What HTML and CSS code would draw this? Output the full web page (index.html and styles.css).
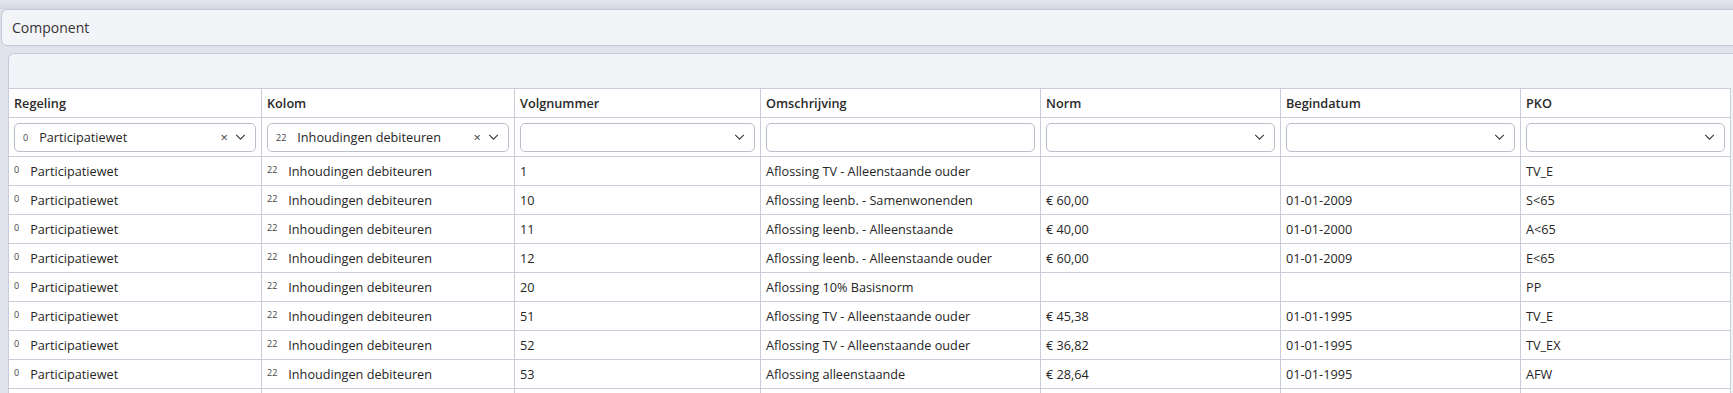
FILE: index.html
```html
<!DOCTYPE html>
<html lang="nl">
<head>
    <meta charset="UTF-8">
    <title>Component</title>
    <link rel="stylesheet" href="styles.css">
</head>
<body>
    <div class="topstrip"></div>
    <div class="component-bar">Component</div>

    <div class="panel">
        <div class="panel-toolbar"></div>
        <table class="grid">
            <colgroup>
                <col style="width:253px">
                <col style="width:253px">
                <col style="width:246px">
                <col style="width:280px">
                <col style="width:240px">
                <col style="width:240px">
                <col style="width:210px">
            </colgroup>
            <thead>
                <tr class="head">
                    <th>Regeling</th>
                    <th>Kolom</th>
                    <th>Volgnummer</th>
                    <th>Omschrijving</th>
                    <th>Norm</th>
                    <th>Begindatum</th>
                    <th>PKO</th>
                </tr>
                <tr class="filters">
                    <td><div class="filter"><span class="code">0</span><span class="val">Participatiewet</span><span class="clear">&times;</span><svg class="chev" viewBox="0 0 12 7"><polyline points="1,1 6,6 11,1"/></svg></div></td>
                    <td><div class="filter"><span class="code">22</span><span class="val">Inhoudingen debiteuren</span><span class="clear">&times;</span><svg class="chev" viewBox="0 0 12 7"><polyline points="1,1 6,6 11,1"/></svg></div></td>
                    <td><div class="filter"><span class="val"></span><svg class="chev" viewBox="0 0 12 7"><polyline points="1,1 6,6 11,1"/></svg></div></td>
                    <td><div class="filter"><span class="val"></span></div></td>
                    <td><div class="filter"><span class="val"></span><svg class="chev" viewBox="0 0 12 7"><polyline points="1,1 6,6 11,1"/></svg></div></td>
                    <td><div class="filter"><span class="val"></span><svg class="chev" viewBox="0 0 12 7"><polyline points="1,1 6,6 11,1"/></svg></div></td>
                    <td><div class="filter"><span class="val"></span><svg class="chev" viewBox="0 0 12 7"><polyline points="1,1 6,6 11,1"/></svg></div></td>
                </tr>
            </thead>
            <tbody>
                <tr><td><span class="code">0</span>Participatiewet</td><td><span class="code">22</span>Inhoudingen debiteuren</td><td>1</td><td>Aflossing TV - Alleenstaande ouder</td><td></td><td></td><td>TV_E</td></tr>
                <tr><td><span class="code">0</span>Participatiewet</td><td><span class="code">22</span>Inhoudingen debiteuren</td><td>10</td><td>Aflossing leenb. - Samenwonenden</td><td>€ 60,00</td><td>01-01-2009</td><td>S&lt;65</td></tr>
                <tr><td><span class="code">0</span>Participatiewet</td><td><span class="code">22</span>Inhoudingen debiteuren</td><td>11</td><td>Aflossing leenb. - Alleenstaande</td><td>€ 40,00</td><td>01-01-2000</td><td>A&lt;65</td></tr>
                <tr><td><span class="code">0</span>Participatiewet</td><td><span class="code">22</span>Inhoudingen debiteuren</td><td>12</td><td>Aflossing leenb. - Alleenstaande ouder</td><td>€ 60,00</td><td>01-01-2009</td><td>E&lt;65</td></tr>
                <tr><td><span class="code">0</span>Participatiewet</td><td><span class="code">22</span>Inhoudingen debiteuren</td><td>20</td><td>Aflossing 10% Basisnorm</td><td></td><td></td><td>PP</td></tr>
                <tr><td><span class="code">0</span>Participatiewet</td><td><span class="code">22</span>Inhoudingen debiteuren</td><td>51</td><td>Aflossing TV - Alleenstaande ouder</td><td>€ 45,38</td><td>01-01-1995</td><td>TV_E</td></tr>
                <tr><td><span class="code">0</span>Participatiewet</td><td><span class="code">22</span>Inhoudingen debiteuren</td><td>52</td><td>Aflossing TV - Alleenstaande ouder</td><td>€ 36,82</td><td>01-01-1995</td><td>TV_EX</td></tr>
                <tr><td><span class="code">0</span>Participatiewet</td><td><span class="code">22</span>Inhoudingen debiteuren</td><td>53</td><td>Aflossing alleenstaande</td><td>€ 28,64</td><td>01-01-1995</td><td>AFW</td></tr>
                <tr><td></td><td></td><td></td><td></td><td></td><td></td><td></td></tr>
            </tbody>
        </table>
    </div>
</body>
</html>
```

FILE: styles.css
```css
body {
    margin: 0;
    padding: 0;
    background-color: #e0e3ec;
    font-family: "Open Sans", "Noto Sans", sans-serif;
    font-size: 12.7px;
    color: #262626;
    overflow: hidden;
}

.topstrip {
    height: 9px;
    background: linear-gradient(#e6e8ef, #d3d7e1);
}

.component-bar {
    box-sizing: border-box;
    height: 37px;
    margin-left: 1px;
    width: calc(100% + 10px);
    padding: 0 10px;
    display: flex;
    align-items: center;
    font-size: 14px;
    color: #333;
    background-color: #f3f4f8;
    border: 1px solid #c2c7d3;
    border-radius: 6px;
}

.panel {
    margin: 7px 0 0 8px;
    background-color: #f3f4f8;
    border-top: 1px solid #c6cbd7;
    border-left: 1px solid #c6cbd7;
    border-top-left-radius: 6px;
}

.panel-toolbar {
    height: 34px;
}

.grid {
    border-collapse: collapse;
    table-layout: fixed;
    width: 1722px;
    margin-left: -1px;
    background-color: #fff;
}

.grid th,
.grid td {
    border: 1px solid #c8cdd9;
    padding: 0 5px;
    text-align: left;
    white-space: nowrap;
    overflow: hidden;
}

.grid tbody td {
    height: 28px;
}

.head th {
    height: 28px;
    font-weight: 600;
    color: #2a2a2a;
    background-color: #fff;
}

.filters td {
    height: 38px;
}

.filter {
    box-sizing: border-box;
    height: 29px;
    border: 1px solid #b9c0cc;
    border-radius: 5px;
    display: flex;
    align-items: center;
    padding: 0 9px 0 8px;
    background-color: #fff;
}

.filter .val {
    flex: 1;
    overflow: hidden;
}

.code {
    display: inline-block;
    font-size: 9px;
    vertical-align: 3px;
    margin-right: 11px;
    color: #444;
}

.filter .code {
    vertical-align: 0;
    margin-right: 11px;
}

.clear {
    font-size: 13px;
    color: #444;
    margin-right: 7px;
}

.chev {
    width: 11px;
    height: 6px;
    fill: none;
    stroke: #3a3a3a;
    stroke-width: 1.3;
}
```
